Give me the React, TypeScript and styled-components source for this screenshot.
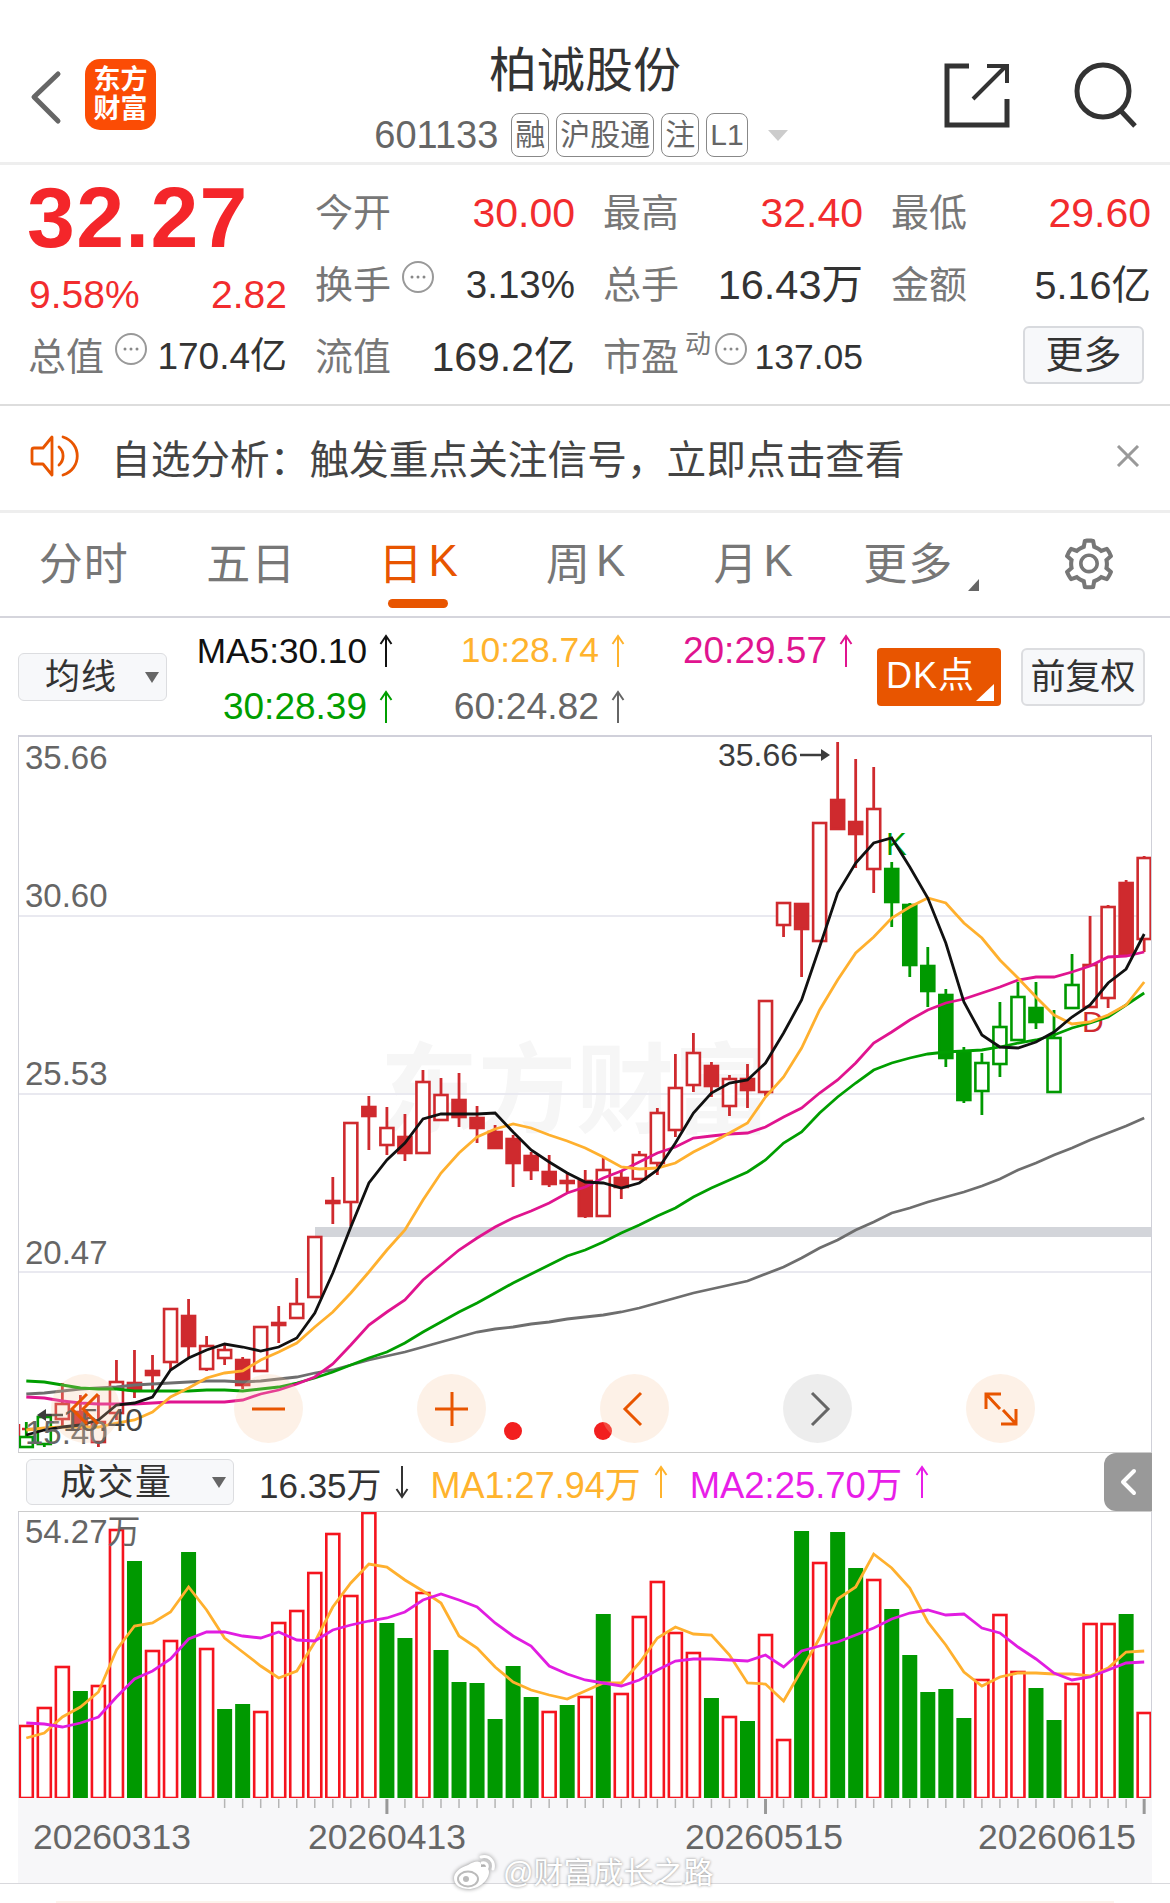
import { styled, createGlobalStyle } from "styled-components";
import { AiOutlineSetting } from "react-icons/ai";

const ORANGE = "#e85500";
const RED = "#f22c2e";

const GlobalStyle = createGlobalStyle`
    html, body {
        margin: 0;
        padding: 0;
        background: #fff;
    }
    body {
        font-family: "Liberation Sans", "Noto Sans CJK SC", sans-serif;
    }
`;

// one bar = 18.03px, first bar centre at x=26.3
const barX = (i: number) => 26.3 + 18.03 * i;
const toPoints = (ys: number[]) => ys.map((y, i) => `${barX(i).toFixed(1)},${y}`).join(" ");

// [wick top, body top, body bottom, wick bottom, kind]
// r = hollow red, R = solid red, g = hollow green, G = solid green
type Candle = [number, number, number, number, string];
const CANDLES: Candle[] = [
    [1422, 1437, 1447, 1447, "g"], [1413, 1417, 1444, 1447, "g"], [1383, 1404, 1419, 1428, "r"], [1395, 1412, 1425, 1430, "R"],
    [1395, 1422, 1442, 1447, "r"], [1360, 1382, 1413, 1420, "r"], [1350, 1383, 1390, 1398, "R"], [1355, 1371, 1375, 1392, "R"],
    [1309, 1309, 1362, 1370, "r"], [1299, 1316, 1346, 1357, "R"], [1336, 1346, 1369, 1371, "r"], [1343, 1350, 1358, 1365, "r"],
    [1357, 1360, 1385, 1389, "R"], [1327, 1327, 1371, 1371, "r"], [1306, 1323, 1325, 1343, "R"], [1278, 1304, 1318, 1318, "r"],
    [1237, 1237, 1297, 1297, "r"], [1177, 1201, 1203, 1224, "R"], [1123, 1123, 1202, 1226, "r"], [1096, 1107, 1116, 1150, "R"],
    [1107, 1128, 1145, 1155, "r"], [1114, 1137, 1153, 1161, "R"], [1070, 1082, 1153, 1153, "r"], [1078, 1095, 1120, 1120, "r"],
    [1073, 1100, 1117, 1127, "R"], [1106, 1118, 1128, 1143, "R"], [1125, 1132, 1148, 1148, "R"], [1135, 1139, 1163, 1187, "R"],
    [1152, 1156, 1170, 1180, "R"], [1155, 1172, 1184, 1187, "R"], [1172, 1181, 1183, 1192, "R"], [1170, 1181, 1216, 1218, "R"],
    [1158, 1170, 1216, 1216, "r"], [1170, 1178, 1187, 1199, "R"], [1151, 1155, 1179, 1179, "r"], [1108, 1113, 1163, 1175, "r"],
    [1054, 1088, 1130, 1137, "r"], [1033, 1053, 1085, 1092, "r"], [1062, 1066, 1086, 1097, "R"], [1075, 1079, 1106, 1116, "r"],
    [1064, 1079, 1090, 1108, "R"], [1001, 1001, 1092, 1096, "r"], [903, 903, 925, 937, "r"], [904, 904, 929, 977, "R"],
    [823, 823, 941, 941, "r"], [742, 800, 829, 829, "R"], [759, 822, 834, 868, "R"], [767, 809, 869, 893, "r"],
    [862, 869, 902, 927, "G"], [903, 905, 965, 977, "G"], [947, 966, 991, 1007, "G"], [989, 995, 1058, 1067, "G"],
    [1047, 1053, 1100, 1103, "G"], [1053, 1063, 1091, 1115, "g"], [1002, 1027, 1064, 1077, "g"], [982, 997, 1040, 1040, "g"],
    [982, 1008, 1022, 1029, "G"], [1010, 1038, 1092, 1092, "g"], [954, 985, 1008, 1008, "g"], [916, 965, 1007, 1007, "r"],
    [905, 907, 998, 1008, "r"], [880, 883, 955, 955, "R"], [856, 858, 939, 952, "r"],
];

const MA5 = [
    1435, 1430, 1427, 1425, 1420, 1405, 1403, 1397, 1370, 1358, 1350, 1344, 1347, 1351, 1347, 1338, 1313, 1273, 1227, 1183, 1160,
    1143, 1119, 1114, 1114, 1114, 1113, 1132, 1150, 1162, 1173, 1182, 1183, 1188, 1183, 1170, 1143, 1113, 1093, 1083, 1080, 1063,
    1033, 1000, 947, 893, 863, 843, 838, 867, 898, 943, 1002, 1035, 1047, 1048, 1042, 1032, 1017, 1005, 983, 969, 934,
];
const MA10 = [
    1430, 1428, 1427, 1427, 1427, 1423, 1420, 1412, 1397, 1388, 1378, 1373, 1371, 1360, 1352, 1343, 1327, 1312, 1293, 1272, 1250,
    1230, 1200, 1173, 1153, 1137, 1129, 1124, 1128, 1135, 1141, 1148, 1157, 1167, 1169, 1168, 1163, 1152, 1143, 1133, 1123, 1097,
    1077, 1048, 1010, 980, 953, 937, 918, 907, 898, 903, 923, 938, 960, 978, 997, 1015, 1024, 1022, 1015, 1005, 982,
];
const MA20 = [
    1397, 1398, 1401, 1403, 1404, 1404, 1404, 1403, 1402, 1402, 1402, 1402, 1400, 1394, 1390, 1384, 1377, 1364, 1345, 1325, 1312,
    1300, 1280, 1265, 1250, 1238, 1227, 1218, 1211, 1203, 1193, 1187, 1178, 1171, 1162, 1153, 1147, 1138, 1136, 1134, 1133, 1127,
    1117, 1108, 1093, 1080, 1063, 1043, 1032, 1020, 1010, 1003, 999, 993, 987, 980, 977, 977, 972, 966, 957, 956, 952,
];
const MA30 = [
    1381, 1382, 1385, 1388, 1389, 1389, 1391, 1391, 1391, 1391, 1390, 1390, 1391, 1389, 1387, 1383, 1378, 1372, 1365, 1358, 1352,
    1343, 1332, 1322, 1312, 1303, 1293, 1283, 1274, 1265, 1256, 1250, 1242, 1233, 1225, 1216, 1208, 1197, 1188, 1180, 1172, 1160,
    1143, 1132, 1113, 1097, 1083, 1070, 1063, 1058, 1054, 1052, 1051, 1050, 1047, 1043, 1040, 1035, 1028, 1023, 1017, 1005, 993,
];
const MA60 = [
    1394, 1393, 1391, 1389, 1388, 1387, 1385, 1384, 1383, 1382, 1381, 1381, 1382, 1381, 1379, 1377, 1373, 1370, 1365, 1360, 1356,
    1352, 1347, 1342, 1337, 1332, 1329, 1327, 1324, 1322, 1319, 1317, 1315, 1312, 1308, 1303, 1298, 1293, 1289, 1285, 1281, 1274,
    1267, 1258, 1248, 1240, 1230, 1222, 1213, 1208, 1202, 1197, 1192, 1186, 1179, 1170, 1163, 1155, 1148, 1140, 1133, 1126, 1118,
];

const VOL_TOP = [
    1725, 1707, 1666, 1691, 1685, 1529, 1561, 1650, 1640, 1552, 1648, 1709, 1704, 1711, 1622, 1610, 1572, 1533, 1595, 1512, 1623,
    1638, 1592, 1650, 1682, 1683, 1719, 1666, 1697, 1711, 1705, 1696, 1614, 1693, 1616, 1581, 1632, 1652, 1698, 1716, 1721, 1634,
    1739, 1531, 1562, 1532, 1568, 1579, 1609, 1655, 1692, 1689, 1718, 1679, 1614, 1671, 1688, 1720, 1683, 1623, 1623, 1614, 1712,
];
const VOL_KIND = "rrrgrrgrrgrggrrrrrrrggrggggggrgrgrrrrrgrgrrgrggrgggggrrrggrrrgr";
const VOL_MA1 = [
    1738, 1733, 1717, 1707, 1692, 1650, 1626, 1623, 1612, 1587, 1610, 1638, 1652, 1666, 1678, 1671, 1642, 1607, 1583, 1564, 1567,
    1580, 1591, 1603, 1636, 1648, 1667, 1682, 1690, 1695, 1699, 1691, 1683, 1683, 1663, 1638, 1627, 1634, 1635, 1655, 1683, 1684,
    1701, 1670, 1638, 1599, 1587, 1554, 1568, 1588, 1622, 1645, 1672, 1686, 1677, 1673, 1673, 1674, 1674, 1676, 1668, 1652, 1651,
];
const VOL_MA2 = [
    1723, 1724, 1727, 1723, 1717, 1697, 1679, 1671, 1659, 1639, 1632, 1632, 1636, 1638, 1632, 1640, 1641, 1630, 1625, 1621, 1618,
    1612, 1600, 1594, 1600, 1607, 1623, 1636, 1646, 1666, 1674, 1680, 1683, 1686, 1680, 1670, 1661, 1659, 1659, 1660, 1661, 1655,
    1667, 1651, 1646, 1642, 1635, 1628, 1619, 1613, 1610, 1615, 1614, 1628, 1633, 1647, 1659, 1673, 1680, 1677, 1670, 1663, 1662,
];

const Arrow = ({ down = false }: { down?: boolean }) => (
    <ArrowSvg viewBox="0 0 18 34" $down={down}>
        <path d="M9 33V2M3.500 10L9 2l5.500 8" fill="none" stroke="currentColor" strokeWidth="2" />
    </ArrowSvg>
);

const Dots = () => (
    <DotsCircle>
        <svg width="16" height="4" viewBox="0 0 16 4">
            <circle cx="2" cy="2" r="1.500" fill="#888" />
            <circle cx="8" cy="2" r="1.500" fill="#888" />
            <circle cx="14" cy="2" r="1.500" fill="#888" />
        </svg>
    </DotsCircle>
);

const MainChart = () => (
    <svg width="1134" height="717" viewBox="18 735 1134 717" style={{ display: "block" }}>
        <text x="380" y="1125" fontSize="98" fontWeight="700" fill="#f6f6f6">东方财富</text>
        {[916, 1094, 1272].map((y) => (
            <line key={y} x1="18" x2="1152" y1={y} y2={y} stroke="#e9e9f0" strokeWidth="2" />
        ))}
        <rect x="315" y="1227" width="837" height="10" fill="#d3d5da" />
        <line x1="22" x2="36" y1="1429" y2="1429" stroke="#cf2a2e" strokeWidth="2.500" />
        <line x1="19" x2="19" y1="1424" y2="1436" stroke="#cf2a2e" strokeWidth="2.500" />
        {CANDLES.map(([high, top, bottom, low, kind], i) => {
            const x = barX(i);
            const isRed = kind === "r" || kind === "R";
            const solid = kind === "R" || kind === "G";
            const color = isRed ? "#cf2a2e" : "#009900";
            return (
                <g key={i}>
                    <line x1={x} x2={x} y1={high} y2={low} stroke={color} strokeWidth="2.800" />
                    <rect
                        x={x - 6.5}
                        y={top}
                        width="13"
                        height={Math.max(bottom - top, 1)}
                        fill={solid ? color : "#fff"}
                        stroke={color}
                        strokeWidth="2.600"
                    />
                </g>
            );
        })}
        <text x="886" y="855" fontSize="31" fill="#009900">K</text>
        <text x="1082" y="1032" fontSize="30" fill="#cf2a2e">D</text>
        <polyline points={toPoints(MA60)} fill="none" stroke="#6e6e6e" strokeWidth="2.800" />
        <polyline points={toPoints(MA30)} fill="none" stroke="#009e00" strokeWidth="2.800" />
        <polyline points={toPoints(MA20)} fill="none" stroke="#e0148f" strokeWidth="2.800" />
        <polyline points={toPoints(MA10)} fill="none" stroke="#ffb02e" strokeWidth="2.800" />
        <polyline points={toPoints(MA5)} fill="none" stroke="#111" strokeWidth="2.800" />
        <circle cx="513" cy="1431" r="9" fill="#f21f1f" />
        <circle cx="603" cy="1431" r="9" fill="#f21f1f" />
    </svg>
);

const VolumeChart = () => (
    <svg width="1134" height="286" viewBox="18 1512 1134 286" style={{ display: "block" }}>
        {VOL_TOP.map((top, i) => {
            const x = barX(i);
            return VOL_KIND[i] === "r" ? (
                <rect key={i} x={x - 6.5} y={top + 1} width="13" height={1797 - top} fill="#fff" stroke="#f5141e" strokeWidth="2.600" />
            ) : (
                <rect key={i} x={x - 7.5} y={top} width="15" height={1798 - top} fill="#009900" />
            );
        })}
        <polyline points={toPoints(VOL_MA1)} fill="none" stroke="#ffb02e" strokeWidth="2.800" />
        <polyline points={toPoints(VOL_MA2)} fill="none" stroke="#e11de1" strokeWidth="2.800" />
    </svg>
);

const AxisTicks = () => {
    const major = [20, 41, 62];
    const items = Array.from({ length: 52 }, (_, n) => n + 11);
    return (
        <svg width="1134" height="18" viewBox="18 1798 1134 18" style={{ display: "block" }}>
            {items.map((i) => (
                <line
                    key={i}
                    x1={barX(i)}
                    x2={barX(i)}
                    y1="1799"
                    y2={major.includes(i) ? 1814 : 1808}
                    stroke={major.includes(i) ? "#999" : "#b5b5b5"}
                    strokeWidth={major.includes(i) ? 3 : 1.5}
                />
            ))}
        </svg>
    );
};

export default function App() {
    return (
        <Page>
            <GlobalStyle />
            <Header>
                <HeaderLeft>
                    <svg width="36" height="58" viewBox="0 0 36 58">
                        <path d="M29 5L5 28l24 24" fill="none" stroke="#666" strokeWidth="5" strokeLinecap="round" strokeLinejoin="round" />
                    </svg>
                    <Logo>
                        <span>东方</span>
                        <span>财富</span>
                    </Logo>
                </HeaderLeft>
                <HeaderCenter>
                    <Title>柏诚股份</Title>
                    <CodeRow>
                        <Code>601133</Code>
                        <Tag>融</Tag>
                        <Tag>沪股通</Tag>
                        <Tag>注</Tag>
                        <Tag>L1</Tag>
                        <CodeCaret />
                    </CodeRow>
                </HeaderCenter>
                <HeaderRight>
                    <svg width="66" height="66" viewBox="0 0 66 66">
                        <path d="M25 4H3v59h60V37" fill="none" stroke="#333" strokeWidth="5" />
                        <path d="M29 37L62 4M43 4h20v17" fill="none" stroke="#333" strokeWidth="4" />
                    </svg>
                    <svg width="66" height="66" viewBox="0 0 66 66">
                        <circle cx="31" cy="29" r="26" fill="none" stroke="#333" strokeWidth="5" />
                        <path d="M49 49l14 15" fill="none" stroke="#333" strokeWidth="5" />
                    </svg>
                </HeaderRight>
            </Header>

            <Stats>
                <PriceBlock>
                    <Price>32.27</Price>
                    <ChangeRow>
                        <span>9.58%</span>
                        <span>2.82</span>
                    </ChangeRow>
                </PriceBlock>
                <Cell>
                    <Label>今开</Label>
                    <Value $red $size={41}>30.00</Value>
                </Cell>
                <Cell>
                    <Label>最高</Label>
                    <Value $red $size={41}>32.40</Value>
                </Cell>
                <Cell>
                    <Label>最低</Label>
                    <Value $red $size={41}>29.60</Value>
                </Cell>
                <Cell>
                    <LabelGroup>
                        <Label>换手</Label>
                        <Dots />
                    </LabelGroup>
                    <Value $size={38.5}>3.13%</Value>
                </Cell>
                <Cell>
                    <Label>总手</Label>
                    <Value $size={41.5}>16.43万</Value>
                </Cell>
                <Cell>
                    <Label>金额</Label>
                    <Value $size={39.5}>5.16亿</Value>
                </Cell>
                <Cell>
                    <LabelGroup>
                        <Label>总值</Label>
                        <Dots />
                    </LabelGroup>
                    <Value $size={37}>170.4亿</Value>
                </Cell>
                <Cell>
                    <Label>流值</Label>
                    <Value $size={41}>169.2亿</Value>
                </Cell>
                <Cell>
                    <LabelGroup>
                        <Label>市盈</Label>
                        <Sup>动</Sup>
                        <Dots />
                    </LabelGroup>
                    <Value $size={35.5}>137.05</Value>
                </Cell>
                <MoreCell>
                    <MoreButton>更多</MoreButton>
                </MoreCell>
            </Stats>

            <Notice>
                <svg width="50" height="42" viewBox="0 0 50 42">
                    <path
                        d="M4 13h9L22 2v38l-9-11H4a2 2 0 0 1-2-2V15a2 2 0 0 1 2-2z"
                        fill="none"
                        stroke={ORANGE}
                        strokeWidth="2.800"
                        strokeLinejoin="round"
                    />
                    <path d="M29 12a12 12 0 0 1 0 18M33 2c19 6 19 32 0 38" fill="none" stroke={ORANGE} strokeWidth="2.800" strokeLinecap="round" />
                </svg>
                <NoticeText>自选分析：触发重点关注信号，立即点击查看</NoticeText>
                <svg width="24" height="22" viewBox="0 0 24 22">
                    <path d="M2 1l20 20M22 1L2 21" stroke="#999" strokeWidth="3" />
                </svg>
            </Notice>

            <Tabs>
                <Tab>分时</Tab>
                <Tab>五日</Tab>
                <Tab $active>日<TabK>K</TabK></Tab>
                <Tab>周<TabK>K</TabK></Tab>
                <Tab>月<TabK>K</TabK></Tab>
                <Tab>
                    更多
                    <TabCorner />
                </Tab>
                <Tab>
                    <GearIcon size={58} color="#777" />
                </Tab>
            </Tabs>

            <MaRow>
                <Dropdown $width={149} $height={48}>
                    均线
                    <DropCaret />
                </Dropdown>
                <MaGrid>
                    <MaItem $color="#111" $size={35.2}>MA5:30.10<Arrow /></MaItem>
                    <MaItem $color="#ffb32d" $size={35.5}>10:28.74<Arrow /></MaItem>
                    <MaItem $color="#e0148f" $size={37}>20:29.57<Arrow /></MaItem>
                    <MaItem $color="#009e00" $size={37}>30:28.39<Arrow /></MaItem>
                    <MaItem $color="#666" $size={37.3}>60:24.82<Arrow /></MaItem>
                </MaGrid>
                <DkButton>
                    DK点
                    <DkCorner />
                </DkButton>
                <RightButton>前复权</RightButton>
            </MaRow>

            <ChartBox>
                <MainChart />
                <AxisLabel $top={7}>35.66</AxisLabel>
                <AxisLabel $top={145}>30.60</AxisLabel>
                <AxisLabel $top={323}>25.53</AxisLabel>
                <AxisLabel $top={502}>20.47</AxisLabel>
                <AxisLabel $top={682}>15.40</AxisLabel>
                <HighMark>
                    35.66
                    <svg width="30" height="14" viewBox="0 0 30 14">
                        <path d="M0 7h24" stroke="#3c3c3c" strokeWidth="2.500" />
                        <path d="M21 1l9 6-9 6z" fill="#3c3c3c" />
                    </svg>
                </HighMark>
                <LowMark>
                    <svg width="26" height="14" viewBox="0 0 26 14">
                        <path d="M6 7h20" stroke="#3c3c3c" strokeWidth="2.500" />
                        <path d="M9 1L0 7l9 6z" fill="#3c3c3c" />
                    </svg>
                    15.40
                </LowMark>
                <Controls>
                    <RoundButton>
                        <svg width="36" height="36" viewBox="0 0 36 36">
                            <path d="M19 3L4 18l15 15M30 3L15 18l15 15" fill="none" stroke={ORANGE} strokeWidth="3" />
                        </svg>
                    </RoundButton>
                    <RoundButton>
                        <svg width="36" height="36" viewBox="0 0 36 36">
                            <path d="M1 18h33" stroke={ORANGE} strokeWidth="3" />
                        </svg>
                    </RoundButton>
                    <RoundButton>
                        <svg width="36" height="36" viewBox="0 0 36 36">
                            <path d="M1 18h33M18 1v34" stroke={ORANGE} strokeWidth="3" />
                        </svg>
                    </RoundButton>
                    <RoundButton>
                        <svg width="36" height="36" viewBox="0 0 36 36">
                            <path d="M24 2L8 18l16 16" fill="none" stroke={ORANGE} strokeWidth="3" />
                        </svg>
                    </RoundButton>
                    <RoundButton $grey>
                        <svg width="36" height="36" viewBox="0 0 36 36">
                            <path d="M12 2l16 16-16 16" fill="none" stroke="#666" strokeWidth="3" />
                        </svg>
                    </RoundButton>
                    <RoundButton>
                        <svg width="36" height="36" viewBox="0 0 36 36">
                            <path d="M3 18V3h15M3 3l14 15M33 18v15H18M33 33L20 19" fill="none" stroke={ORANGE} strokeWidth="3" />
                        </svg>
                    </RoundButton>
                </Controls>
            </ChartBox>

            <VolumeHeader>
                <Dropdown $width={208} $height={46} $wide>
                    成交量
                    <DropCaret />
                </Dropdown>
                <VolumeItem $color="#333" $size={35}>16.35万<Arrow down /></VolumeItem>
                <VolumeItem $color="#ffb32d" $size={36}>MA1:27.94万<Arrow /></VolumeItem>
                <VolumeItem $color="#e81ee8" $size={36.4}>MA2:25.70万<Arrow /></VolumeItem>
                <SideTab>
                    <svg width="18" height="28" viewBox="0 0 18 28">
                        <path d="M15 3L4 14l11 11" fill="none" stroke="#fff" strokeWidth="4" strokeLinecap="round" strokeLinejoin="round" />
                    </svg>
                </SideTab>
            </VolumeHeader>

            <VolumeBox>
                <VolumeChart />
                <AxisLabel $top={4}>54.27万</AxisLabel>
            </VolumeBox>

            <AxisBox>
                <AxisTicks />
                <DateLabel $left={15}>20260313</DateLabel>
                <DateLabel $left={290}>20260413</DateLabel>
                <DateLabel $left={667}>20260515</DateLabel>
                <DateLabel $left={960}>20260615</DateLabel>
            </AxisBox>

            <BottomRule />
            <Watermark>
                <svg width="44" height="38" viewBox="0 0 44 38">
                    <path
                        d="M15 11c6-4 12-5 13-1 .5 2 0 3 0 3 4-1 8 0 8 5 0 8-10 17-20 17C7 35 1 31 1 24c0-5 5-10 14-13z"
                        fill="#fff"
                    />
                    <ellipse cx="15" cy="25" rx="10" ry="7.500" fill="none" stroke="#bbb" strokeWidth="2" />
                    <circle cx="13" cy="25" r="3" fill="#bbb" />
                    <path d="M28 3c8-2 14 4 12 12M29 9c4-1 6 2 5 5" fill="none" stroke="#fff" strokeWidth="3" strokeLinecap="round" />
                </svg>
                <span>@财富成长之路</span>
            </Watermark>
            <FootLine />
        </Page>
    );
}

const Page = styled.div`
    position: relative;
    width: 1170px;
    height: 1903px;
    overflow: hidden;
    background: #fff;
`;

const Header = styled.header`
    display: grid;
    grid-template-columns: 1fr auto 1fr;
    height: 162px;
    border-bottom: 3px solid #eee;
`;

const HeaderLeft = styled.div`
    display: flex;
    align-items: flex-start;
    gap: 20px;
    padding: 59px 0 0 29px;
    svg {
        margin-top: 10px;
    }
`;

const Logo = styled.div`
    width: 71px;
    height: 71px;
    border-radius: 15px;
    background: #fb4c05;
    color: #fff;
    font-size: 27px;
    font-weight: 700;
    line-height: 29px;
    display: flex;
    flex-direction: column;
    align-items: center;
    justify-content: center;
`;

const HeaderCenter = styled.div`
    display: flex;
    flex-direction: column;
    align-items: center;
    padding-top: 46px;
`;

const Title = styled.div`
    font-size: 48px;
    line-height: 50px;
    color: #333;
    margin-bottom: 17px;
`;

const CodeRow = styled.div`
    display: flex;
    align-items: center;
    gap: 7px;
    padding-right: 8px;
`;

const Code = styled.span`
    font-size: 38px;
    line-height: 44px;
    color: #666;
    margin-right: 6px;
`;

const Tag = styled.span`
    height: 44px;
    box-sizing: border-box;
    padding: 0 3px;
    border: 1px solid #888;
    border-radius: 8px;
    font-size: 30px;
    line-height: 42px;
    color: #666;
`;

const CodeCaret = styled.i`
    width: 0;
    height: 0;
    margin-left: 13px;
    border-left: 10px solid transparent;
    border-right: 10px solid transparent;
    border-top: 11px solid #ccc;
`;

const HeaderRight = styled.div`
    display: flex;
    justify-content: flex-end;
    align-items: flex-start;
    gap: 62px;
    padding: 62px 32px 0 0;
`;

const Stats = styled.section`
    display: grid;
    grid-template-columns: 257px 258px 258px 258px;
    grid-template-rows: repeat(3, 72px);
    column-gap: 30px;
    padding: 12px 0 11px 30px;
    border-bottom: 2px solid #ddd;
    box-sizing: border-box;
    height: 241px;
`;

const PriceBlock = styled.div`
    grid-row: 1 / 3;
    display: flex;
    flex-direction: column;
`;

const Price = styled.div`
    margin: -2px 0 0 -3px;
    font-size: 86px;
    font-weight: 700;
    line-height: 84px;
    letter-spacing: 1.300px;
    color: #f4262a;
`;

const ChangeRow = styled.div`
    display: flex;
    justify-content: space-between;
    margin: 16px 0 0 -1px;
    font-size: 39px;
    line-height: 40px;
    color: ${RED};
`;

const Cell = styled.div`
    display: flex;
    align-items: center;
    justify-content: space-between;
`;

const MoreCell = styled.div`
    display: flex;
    align-items: center;
    justify-content: flex-end;
    padding: 0 7px 5px 0;
`;

const LabelGroup = styled.div`
    display: flex;
    align-self: stretch;
    align-items: center;
    white-space: nowrap;
`;

const Label = styled.span`
    margin-left: -2px;
    font-size: 38px;
    line-height: 40px;
    color: #777;
    white-space: nowrap;
`;

const Sup = styled.span`
    align-self: flex-start;
    margin: 9px 4px 0 6px;
    font-size: 26px;
    line-height: 28px;
    color: #777;
`;

const DotsCircle = styled.span`
    align-self: flex-start;
    margin: 12px 0 0 11px;
    width: 32px;
    height: 32px;
    box-sizing: border-box;
    border: 2px solid #999;
    border-radius: 50%;
    display: flex;
    align-items: center;
    justify-content: center;
    ${Sup} + & {
        margin-left: 0;
    }
`;

const Value = styled.span<{ $red?: boolean; $size: number }>`
    font-size: ${(p) => p.$size}px;
    line-height: 42px;
    color: ${(p) => (p.$red ? RED : "#333")};
    white-space: nowrap;
`;

const MoreButton = styled.div`
    width: 121px;
    height: 58px;
    box-sizing: border-box;
    border: 2px solid #d8dade;
    border-radius: 6px;
    background: #f7f8fa;
    color: #333;
    font-size: 38px;
    line-height: 54px;
    text-align: center;
`;

const Notice = styled.div`
    display: flex;
    align-items: center;
    height: 107px;
    padding: 0 30px 4px;
    box-sizing: border-box;
    border-bottom: 3px solid #eee;
    svg:last-child {
        margin-left: auto;
    }
`;

const NoticeText = styled.span`
    margin-left: 31px;
    font-size: 39.700px;
    color: #444;
    white-space: nowrap;
`;

const Tabs = styled.nav`
    display: grid;
    grid-template-columns: repeat(7, 167.500px);
    height: 105px;
    border-bottom: 2px solid #d5d5dc;
    box-sizing: border-box;
    padding-bottom: 7px;
`;

const Tab = styled.div<{ $active?: boolean }>`
    position: relative;
    display: flex;
    align-items: center;
    justify-content: center;
    font-size: 44px;
    letter-spacing: 1px;
    color: ${(p) => (p.$active ? ORANGE : "#777")};
    ${(p) =>
        p.$active &&
        `
        &::after {
            content: "";
            position: absolute;
            left: 53px;
            bottom: 1px;
            width: 60px;
            height: 9px;
            border-radius: 5px;
            background: ${ORANGE};
        }
    `}
`;

const TabK = styled.span`
    margin-left: 5px;
`;

const TabCorner = styled.i`
    align-self: flex-end;
    margin: 0 0 18px 15px;
    width: 0;
    height: 0;
    border-bottom: 12px solid #666;
    border-left: 11px solid transparent;
`;

const GearIcon = styled(AiOutlineSetting)`
    margin-top: 6px;
`;

const MaRow = styled.div`
    display: flex;
    align-items: center;
    height: 117px;
    padding-left: 18px;
`;

const Dropdown = styled.div<{ $width: number; $height: number; $wide?: boolean }>`
    position: relative;
    flex: none;
    width: ${(p) => p.$width}px;
    height: ${(p) => p.$height}px;
    box-sizing: border-box;
    border: 1.500px solid #dcdde0;
    border-radius: 6px;
    background: #f7f8fa;
    color: #333;
    font-size: ${(p) => (p.$wide ? 36 : 35)}px;
    line-height: ${(p) => p.$height - (p.$wide ? 0 : 3)}px;
    padding-left: ${(p) => (p.$wide ? 33 : 26)}px;
    letter-spacing: ${(p) => (p.$wide ? 1.5 : 1)}px;
`;

const DropCaret = styled.i`
    position: absolute;
    right: 7px;
    top: 50%;
    margin-top: -5px;
    width: 0;
    height: 0;
    border-left: 7px solid transparent;
    border-right: 7px solid transparent;
    border-top: 11px solid #666;
`;

const MaGrid = styled.div`
    display: grid;
    grid-template-columns: 228px 232px 228px;
    grid-auto-rows: 56px;
    margin: 4px 22px 0 0;
    width: 688px;
`;

const MaItem = styled.div<{ $color: string; $size: number }>`
    display: flex;
    align-items: center;
    justify-content: flex-end;
    gap: 10px;
    font-size: ${(p) => p.$size}px;
    color: ${(p) => p.$color};
`;

const ArrowSvg = styled.svg<{ $down?: boolean }>`
    width: 18px;
    height: 34px;
    flex: none;
    transform: ${(p) => (p.$down ? "rotate(180deg)" : "none")};
`;

const DkButton = styled.div`
    position: relative;
    width: 124px;
    height: 58px;
    box-sizing: border-box;
    padding-left: 9px;
    border-radius: 4px;
    background: ${ORANGE};
    color: #fff;
    font-size: 36px;
    line-height: 56px;
    letter-spacing: 1px;
`;

const DkCorner = styled.i`
    position: absolute;
    right: 7px;
    bottom: 5px;
    width: 0;
    height: 0;
    border-bottom: 17px solid #fff;
    border-left: 18px solid transparent;
`;

const RightButton = styled.div`
    width: 124px;
    height: 58px;
    margin-left: 20px;
    box-sizing: border-box;
    border: 2px solid #dcdde0;
    border-radius: 6px;
    background: #f7f8fa;
    color: #333;
    font-size: 35px;
    line-height: 54px;
    text-align: center;
`;

const ChartBox = styled.div`
    position: relative;
    width: 1134px;
    height: 717px;
    margin-left: 18px;
    &::after {
        content: "";
        position: absolute;
        inset: 0;
        box-sizing: border-box;
        border: 1px solid #cfd0d8;
        border-top: 2px solid #d0d0da;
        border-bottom: 0;
        pointer-events: none;
    }
`;

const AxisLabel = styled.div<{ $top: number }>`
    position: absolute;
    left: 7px;
    top: ${(p) => p.$top}px;
    font-size: 33px;
    line-height: 32px;
    color: #666;
`;

const HighMark = styled.div`
    position: absolute;
    left: 700px;
    top: 4px;
    display: flex;
    align-items: center;
    gap: 2px;
    font-size: 32px;
    line-height: 32px;
    color: #3c3c3c;
`;

const LowMark = styled.div`
    position: absolute;
    left: 19px;
    top: 669px;
    display: flex;
    align-items: center;
    gap: 0;
    font-size: 32px;
    line-height: 32px;
    color: #444;
    svg {
        margin-top: -10px;
    }
`;

const Controls = styled.div`
    position: absolute;
    left: 33px;
    bottom: 9px;
    display: flex;
    gap: 114px;
`;

const RoundButton = styled.div<{ $grey?: boolean }>`
    width: 69px;
    height: 69px;
    border-radius: 50%;
    background: ${(p) => (p.$grey ? "rgba(0, 0, 0, 0.07)" : "rgba(248, 200, 160, 0.25)")};
    display: flex;
    align-items: center;
    justify-content: center;
`;

const VolumeHeader = styled.div`
    position: relative;
    display: flex;
    align-items: center;
    gap: 20px;
    width: 1134px;
    height: 60px;
    margin-left: 18px;
    padding-left: 8px;
    box-sizing: border-box;
    border-top: 1px solid #ccc;
    border-bottom: 1px solid #ccc;
`;

const VolumeItem = styled.div<{ $color: string; $size: number }>`
    display: flex;
    align-items: center;
    gap: 11px;
    font-size: ${(p) => p.$size}px;
    color: ${(p) => p.$color};
    &:nth-child(2) {
        margin-left: 5px;
    }
`;

const SideTab = styled.div`
    position: absolute;
    right: 0;
    top: 0;
    width: 48px;
    height: 58px;
    border-radius: 12px 0 0 12px;
    background: #999;
    display: flex;
    align-items: center;
    justify-content: center;
`;

const VolumeBox = styled.div`
    position: relative;
    width: 1134px;
    height: 286px;
    margin-left: 18px;
    &::after {
        content: "";
        position: absolute;
        inset: 0;
        border-left: 1px solid #cfd0d8;
        border-right: 1px solid #cfd0d8;
        pointer-events: none;
    }
`;

const AxisBox = styled.div`
    position: relative;
    width: 1134px;
    height: 85px;
    margin-left: 18px;
    background: #f7f7f9;
`;

const DateLabel = styled.div<{ $left: number }>`
    position: absolute;
    left: ${(p) => p.$left}px;
    top: 21px;
    font-size: 35.500px;
    line-height: 36px;
    color: #666;
`;

const BottomRule = styled.div`
    height: 1px;
    background: #d8d8dc;
`;

const Watermark = styled.div`
    position: absolute;
    left: 453px;
    top: 1854px;
    display: flex;
    align-items: center;
    gap: 6px;
    color: #fff;
    font-size: 30px;
    line-height: 38px;
    text-shadow: 0 0 3px #888;
    white-space: nowrap;
    svg {
        filter: drop-shadow(0 0 2px #888);
    }
`;

const FootLine = styled.div`
    position: absolute;
    left: 56px;
    right: 56px;
    bottom: 0;
    height: 2px;
    background: #fdf3ec;
`;
